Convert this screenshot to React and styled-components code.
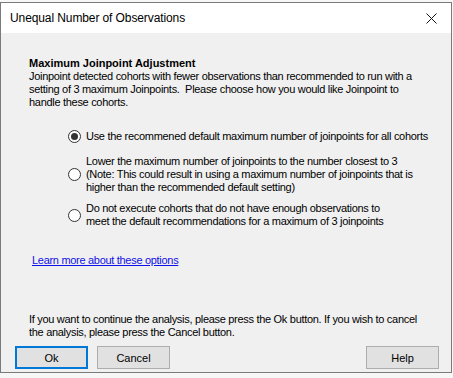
import React, { useState } from 'react';
import styled, { createGlobalStyle } from 'styled-components';

const GlobalStyle = createGlobalStyle`
  html, body {
    margin: 0;
    padding: 0;
    background: #f7f7f7;
  }
  body {
    font-family: "Liberation Sans", Arial, sans-serif;
  }
`

const Dialog = styled.div`
  margin-top: 2px;
  width: 450px;
  height: 369px;
  border: 1px solid #7a7a7a;
  background: #f0f0f0;
  display: flex;
  flex-direction: column;
`

const TitleBar = styled.div`
  height: 30px;
  background: #ffffff;
  display: flex;
  align-items: center;
  justify-content: space-between;
  padding: 0 10px 0 9px;
  font-family: "Liberation Sans", Arial, sans-serif;
  font-size: 12px;
  letter-spacing: -0.1px;
  color: #000;
`

const Close = styled.svg`
  width: 11px;
  height: 11px;
  margin-right: 4px;
`

const Body = styled.div`
  flex: 1;
  display: flex;
  flex-direction: column;
  padding: 24px 12px 0 28px;
  font-size: 11px;
  line-height: 13px;
  letter-spacing: -0.3px;
  color: #000;
  white-space: nowrap;
`

const Heading = styled.div`
  font-weight: bold;
  letter-spacing: 0;
`

const Paragraph = styled.p`
  margin: 0;
`

const OptionList = styled.div`
  display: flex;
  flex-direction: column;
  margin-top: 21px;
  padding-left: 39px;
`

const Option = styled.label`
  display: flex;
  align-items: center;
  gap: 5px;
  margin-top: ${p => p.$gap}px;
  cursor: default;
`

const Radio = styled.span`
  flex: none;
  width: 11px;
  height: 11px;
  border: 1px solid #333;
  border-radius: 50%;
  background: #fff;
  display: flex;
  align-items: center;
  justify-content: center;

  &::after {
    content: '';
    width: 7px;
    height: 7px;
    border-radius: 50%;
    background: ${p => (p.$checked ? '#333' : 'transparent')};
  }
`

const OptionText = styled.span``

const LinkText = styled.a`
  margin-top: 26px;
  margin-left: 3px;
  color: #1010e8;
  text-decoration: underline;
  align-self: flex-start;
`

const Footer = styled.div`
  margin-top: auto;
  display: flex;
  flex-direction: column;
  margin-left: -14px;
  padding-bottom: 3px;
`

const FooterText = styled.p`
  margin: 0 0 7px 0;
  padding-left: 14px;
`

const ButtonRow = styled.div`
  display: flex;
  gap: 9px;
`

const Button = styled.button`
  width: 73px;
  height: 23px;
  padding: 0;
  font-family: "Liberation Sans", Arial, sans-serif;
  font-size: 11px;
  color: #000;
  background: #e1e1e1;
  border: ${p => (p.$primary ? '2px solid #0078d7' : '1px solid #adadad')};
  margin-left: ${p => (p.$push ? 'auto' : '0')};
`

const options = [
  { id: 0, gap: 0, lines: ['Use the recommened default maximum number of joinpoints for all cohorts'] },
  {
    id: 1,
    gap: 12,
    lines: [
      'Lower the maximum number of joinpoints to the number closest to 3',
      '(Note: This could result in using a maximum number of joinpoints that is',
      'higher than the recommended default setting)',
    ],
  },
  {
    id: 2,
    gap: 8,
    lines: [
      'Do not execute cohorts that do not have enough observations to',
      'meet the default recommendations for a maximum of 3 joinpoints',
    ],
  },
]

const App = () => {
  const [choice, setChoice] = useState(0)

  return (
    <>
      <GlobalStyle />
      <Dialog>
        <TitleBar>
          <span>Unequal Number of Observations</span>
          <Close viewBox="0 0 11 11">
            <path d="M0.5 0.5 L10.5 10.5 M10.5 0.5 L0.5 10.5" stroke="#111" strokeWidth="1" fill="none" />
          </Close>
        </TitleBar>
        <Body>
          <Heading>Maximum Joinpoint Adjustment</Heading>
          <Paragraph>
            Joinpoint detected cohorts with fewer observations than recommended to run with a<br />
            setting of 3 maximum Joinpoints.&nbsp; Please choose how you would like Joinpoint to<br />
            handle these cohorts.
          </Paragraph>
          <OptionList>
            {options.map(o => (
              <Option key={o.id} $gap={o.gap} onClick={() => setChoice(o.id)}>
                <Radio $checked={choice === o.id} />
                <OptionText>
                  {o.lines.map((l, i) => (
                    <React.Fragment key={i}>
                      {i > 0 && <br />}
                      {l}
                    </React.Fragment>
                  ))}
                </OptionText>
              </Option>
            ))}
          </OptionList>
          <LinkText>Learn more about these options</LinkText>
          <Footer>
            <FooterText>
              If you want to continue the analysis, please press the Ok button. If you wish to cancel<br />
              the analysis, please press the Cancel button.
            </FooterText>
            <ButtonRow>
              <Button $primary>Ok</Button>
              <Button>Cancel</Button>
              <Button $push>Help</Button>
            </ButtonRow>
          </Footer>
        </Body>
      </Dialog>
    </>
  )
}

export default App;
